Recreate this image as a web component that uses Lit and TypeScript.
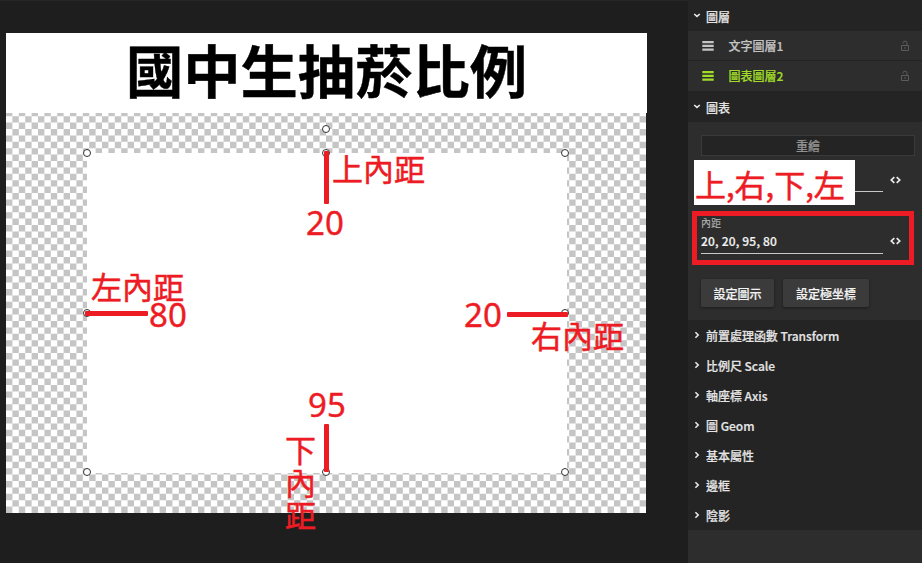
import { LitElement, html, css, svg } from "lit";
import { customElement, property } from "lit/decorators.js";
import { classMap } from "lit/directives/class-map.js";
import { styleMap } from "lit/directives/style-map.js";

const SECTIONS = ["前置處理函數 Transform", "比例尺 Scale", "軸座標 Axis", "圖 Geom", "基本屬性", "邊框", "陰影"];

const HANDLES: [number, number][] = [
  [326, 129], [87, 153], [326, 153], [565, 153],
  [87, 313], [565, 313], [87, 472], [326, 472], [565, 472],
];

const BARS: [number, number, number, number][] = [
  [324, 151, 5, 53],
  [85, 311, 63, 5],
  [507, 312, 61, 5],
  [324, 424, 5, 48],
];

interface Note { text: string; x: number; y: number; kind: "num" | "cjk"; vertical?: boolean }

const NOTES: Note[] = [
  { text: "上內距", x: 332, y: 151, kind: "cjk" },
  { text: "20", x: 306, y: 205, kind: "num" },
  { text: "左內距", x: 91, y: 269, kind: "cjk" },
  { text: "80", x: 149, y: 297, kind: "num" },
  { text: "20", x: 464, y: 297, kind: "num" },
  { text: "右內距", x: 531, y: 318, kind: "cjk" },
  { text: "95", x: 308, y: 387, kind: "num" },
  { text: "下內距", x: 285, y: 433, kind: "cjk", vertical: true },
];

const at = (x: number, y: number) => styleMap({ left: `${x}px`, top: `${y}px` });

// Transparency grid: every other cell of a 100 × 75 board.
const CELLS = Array.from({ length: 75 }, (_, r) =>
  Array.from({ length: 50 }, (_, c) => `M${c * 2 + (r % 2)} ${r}h1v1h-1z`).join("")
).join("");

@customElement("section-header")
export class SectionHeader extends LitElement {
  @property() label = "";
  @property({ type: Boolean }) open = false;

  static styles = css`
    :host { display: flex; align-items: center; padding: 2px 0 0 6px; box-sizing: border-box; color: #e4e4e4; font-weight: 500; gap: 6px; line-height: 18px; }
    .chevron { width: 6px; height: 8px; flex: none; margin-top: -3px; overflow: visible; }
    path { fill: none; stroke: #e8e8e8; stroke-width: 1.6; }
  `;

  render() {
    return html`
      <svg class="chevron" viewBox="0 0 6 8">
        ${this.open ? svg`<path d="M0.2 3L3 5.4L5.8 3" />` : svg`<path d="M1.4 1.2L4.2 4L1.4 6.8" />`}
      </svg>
      <span>${this.label}</span>
    `;
  }
}

@customElement("layer-row")
export class LayerRow extends LitElement {
  @property() label = "";
  @property({ type: Boolean }) active = false;

  static styles = css`
    :host { display: block; }
    .row { display: flex; align-items: center; height: 100%; padding: 0 12px 0 14px; color: #c4c4c4; font-weight: 500; }
    .row.active { color: #a0dc28; }
    .grip { width: 12px; height: 10px; flex: none; fill: currentColor; margin-right: 14.6px; }
    .label { flex: 1; line-height: 18px; }
    .lock { width: 10px; height: 12px; flex: none; fill: none; stroke: #5c5c5c; }
  `;

  render() {
    return html`
      <div class=${classMap({ row: true, active: this.active })}>
        <svg class="grip" viewBox="0 0 12 10"><path d="M0.3 0h11.4v2.3h-11.4zM0.3 3.7h11.4v2.3h-11.4zM0.3 7.4h11.4v2.3h-11.4z" /></svg>
        <span class="label">${this.label}</span>
        <svg class="lock" viewBox="0 0 10 12">
          <path d="M1.5 5.5h7v5h-7zM3 3.5V2.8Q3 1.2 5 1.2Q7 1.2 7 2.8V5.5M4 8h2" />
        </svg>
      </div>
    `;
  }
}

@customElement("app-root")
export class AppRoot extends LitElement {
  static styles = css`
    :host { display: block; position: relative; width: 922px; height: 563px; overflow: hidden; background: #1e1e1e; font: 12px/18px "Noto Sans CJK TC", sans-serif; }
    .shell { display: flex; height: 563px; }
    .workspace { width: 688px; flex: none; box-sizing: border-box; padding: 32px 0 0 6px; border-top: 1px solid #262626; }
    .artboard { display: grid; width: 640px; height: 480px; background: #fff; }
    .grid, .content { grid-area: 1 / 1; }
    .grid { width: 640px; height: 480px; fill: #c5c5c5; }
    .content { position: relative; }
    .title { display: flex; justify-content: center; width: 641px; height: 80px; background: #fff; color: #000; font-size: 57.3px; line-height: 72px; font-weight: 700; white-space: nowrap; -webkit-text-stroke: 0.4px #000; }
    .chart { width: 480px; height: 320px; margin: 40px 0 0 81px; background: #fff; }
    .panel { flex: 1; min-width: 0; background: #2d2d2d; -webkit-text-stroke: 0.2px; }
    .head { background: #242424; height: 31px; }
    .layer { height: 29px; border-bottom: 1px solid #232323; }
    .layer.last { border-color: transparent; }
    .sections { background: #242424; }
    .sections section-header { height: 30px; letter-spacing: -0.03px; }
    .form { height: 198px; box-sizing: border-box; padding: 13px 7px 0 13px; }
    .redraw { height: 21px; box-sizing: border-box; border: 1px solid #393939; background: #242424; color: #929292; text-align: center; line-height: 20px; font-weight: 500; }
    .field { display: flex; }
    .first { height: 36px; }
    .second { height: 37px; margin-top: 25px; }
    .input { width: 182px; box-sizing: border-box; border-bottom: 1px solid #c8c8c8; color: #f2f2f2; font-weight: 500; }
    .caption { font-size: 10px; line-height: 12px; height: 13px; color: #a8a8a8; -webkit-text-stroke: 0; }
    .value { line-height: 20px; padding-top: 1px; letter-spacing: 0.18px; }
    .code { width: 11px; height: 8px; margin: 20px 0 0 7px; fill: none; stroke: #eee; stroke-width: 1.7; }
    .buttons { display: flex; gap: 9px; margin-top: 25px; }
    .button { height: 28px; line-height: 29px; background: #3b3b3b; border-radius: 2px; color: #f4f4f4; text-align: center; font-weight: 500; box-shadow: 0 1px 3px #0006; }
    .legend { width: 73px; }
    .polar { width: 86px; }
    .overlay { position: absolute; inset: 0; }
    .handle { position: absolute; width: 8px; height: 8px; box-sizing: border-box; border: 1px solid #333; border-radius: 50%; background: #fff; }
    .bar { position: absolute; background: #ed1c24; border-radius: 1px; }
    .note { position: absolute; color: #ed1c24; white-space: nowrap; }
    .num { font-family: "Noto Sans", sans-serif; font-size: 33px; line-height: 36px; -webkit-text-stroke: 0.4px; }
    .cjk { font-size: 31px; line-height: 33px; -webkit-text-stroke: 0.5px; }
    .vertical { width: 31px; line-height: 32.5px; white-space: normal; word-break: break-all; }
    .order { position: absolute; left: 694px; top: 160px; width: 161px; height: 45px; box-sizing: border-box; padding: 1px 0 0 1px; background: #fff; color: #ed1c24; font-size: 31px; line-height: 45px; white-space: nowrap; -webkit-text-stroke: 0.5px; }
    .focus { position: absolute; left: 692px; top: 211px; width: 222px; height: 54px; box-sizing: border-box; border: 5px solid #ed1c24; }
  `;

  private code() {
    return html`<svg class="code" viewBox="0 0 11 8"><path d="M4.3 1.2L1.3 4L4.3 6.8M6.7 1.2L9.7 4L6.7 6.8" /></svg>`;
  }

  render() {
    return html`
      <div class="shell">
        <div class="workspace">
          <div class="artboard">
            <svg class="grid" viewBox="0 0 100 75"><path d=${CELLS} /></svg>
            <div class="content">
              <div class="title">國中生抽菸比例</div>
              <div class="chart"></div>
            </div>
          </div>
        </div>
        <div class="panel">
          <section-header class="head" label="圖層" open></section-header>
          <layer-row class="layer" label="文字圖層1"></layer-row>
          <layer-row class="layer last" label="圖表圖層2" active></layer-row>
          <section-header class="head" label="圖表" open></section-header>
          <div class="form">
            <div class="redraw">重繪</div>
            <div class="field first"><div class="input"></div>${this.code()}</div>
            <div class="field second">
              <div class="input"><div class="caption">內距</div><div class="value">20, 20, 95, 80</div></div>
              ${this.code()}
            </div>
            <div class="buttons">
              <div class="button legend">設定圖示</div>
              <div class="button polar">設定極坐標</div>
            </div>
          </div>
          <div class="sections">${SECTIONS.map((s) => html`<section-header label=${s}></section-header>`)}</div>
        </div>
      </div>
      <div class="overlay">
        ${HANDLES.map(([x, y]) => html`<div class="handle" style=${at(x - 4, y - 4)}></div>`)}
        ${BARS.map(([x, y, w, h]) => html`<div class="bar" style=${styleMap({ left: `${x}px`, top: `${y}px`, width: `${w}px`, height: `${h}px` })}></div>`)}
        ${NOTES.map((n) => html`<div class=${classMap({ note: true, [n.kind]: true, vertical: !!n.vertical })} style=${at(n.x, n.y)}>${n.text}</div>`)}
        <div class="order">上,右,下,左</div>
        <div class="focus"></div>
      </div>
    `;
  }
}
